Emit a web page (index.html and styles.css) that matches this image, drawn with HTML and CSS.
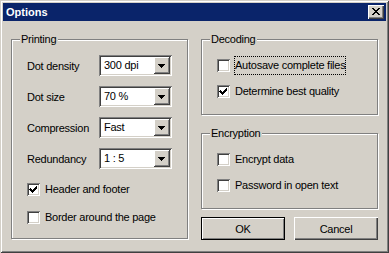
FILE: index.html
```html
<!DOCTYPE html>
<html lang="en">
<head>
    <meta charset="UTF-8">
    <title>Options</title>
    <link rel="stylesheet" href="styles.css">
</head>
<body>
    <div class="window">
        <div class="titlebar">
            <span class="title">Options</span>
            <div class="close-btn">
                <svg width="8" height="7" viewBox="0 0 8 7" shape-rendering="crispEdges">
                    <path d="M0 0h2v1h-2z M6 0h2v1h-2z M1 1h2v1h-2z M5 1h2v1h-2z M2 2h4v1h-4z M3 3h2v1h-2z M2 4h4v1h-4z M1 5h2v1h-2z M5 5h2v1h-2z M0 6h2v1h-2z M6 6h2v1h-2z" fill="#000"/>
                </svg>
            </div>
        </div>

        <div class="client">
            <div class="group printing">
                <div class="group-title">Printing</div>
                <div class="group-body">
                    <div class="field">
                        <span class="field-label">Dot density</span>
                        <div class="combo"><span class="combo-value">300 dpi</span><div class="combo-btn"><svg width="7" height="4" viewBox="0 0 7 4" shape-rendering="crispEdges"><path d="M0 0h7v1h-1v1h-1v1h-1v1h-1v-1h-1v-1h-1v-1h-1z" fill="#000"/></svg></div></div>
                    </div>
                    <div class="field">
                        <span class="field-label">Dot size</span>
                        <div class="combo"><span class="combo-value">70 %</span><div class="combo-btn"><svg width="7" height="4" viewBox="0 0 7 4" shape-rendering="crispEdges"><path d="M0 0h7v1h-1v1h-1v1h-1v1h-1v-1h-1v-1h-1v-1h-1z" fill="#000"/></svg></div></div>
                    </div>
                    <div class="field">
                        <span class="field-label">Compression</span>
                        <div class="combo"><span class="combo-value">Fast</span><div class="combo-btn"><svg width="7" height="4" viewBox="0 0 7 4" shape-rendering="crispEdges"><path d="M0 0h7v1h-1v1h-1v1h-1v1h-1v-1h-1v-1h-1v-1h-1z" fill="#000"/></svg></div></div>
                    </div>
                    <div class="field">
                        <span class="field-label">Redundancy</span>
                        <div class="combo"><span class="combo-value">1 : 5</span><div class="combo-btn"><svg width="7" height="4" viewBox="0 0 7 4" shape-rendering="crispEdges"><path d="M0 0h7v1h-1v1h-1v1h-1v1h-1v-1h-1v-1h-1v-1h-1z" fill="#000"/></svg></div></div>
                    </div>
                    <div class="check-list printing-checks">
                        <div class="check-row">
                            <span class="checkbox"><svg width="9" height="9" viewBox="0 0 9 9" shape-rendering="crispEdges"><path d="M1 3h1v1h1v1h1v-1h1v-1h1v-1h1v-1h1v3h-1v1h-1v1h-1v1h-1v1h-1v-1h-1v-1h-1v-1h-1z" fill="#000"/></svg></span>
                            <span class="check-label">Header and footer</span>
                        </div>
                        <div class="check-row">
                            <span class="checkbox"></span>
                            <span class="check-label">Border around the page</span>
                        </div>
                    </div>
                </div>
            </div>

            <div class="right-col">
                <div class="group">
                    <div class="group-title">Decoding</div>
                    <div class="group-body check-list">
                        <div class="check-row">
                            <span class="checkbox"></span>
                            <span class="check-label focused">Autosave complete files</span>
                        </div>
                        <div class="check-row">
                            <span class="checkbox"><svg width="9" height="9" viewBox="0 0 9 9" shape-rendering="crispEdges"><path d="M1 3h1v1h1v1h1v-1h1v-1h1v-1h1v-1h1v3h-1v1h-1v1h-1v1h-1v1h-1v-1h-1v-1h-1v-1h-1z" fill="#000"/></svg></span>
                            <span class="check-label">Determine best quality</span>
                        </div>
                    </div>
                </div>

                <div class="group encryption">
                    <div class="group-title">Encryption</div>
                    <div class="group-body check-list">
                        <div class="check-row">
                            <span class="checkbox"></span>
                            <span class="check-label">Encrypt data</span>
                        </div>
                        <div class="check-row">
                            <span class="checkbox"></span>
                            <span class="check-label">Password in open text</span>
                        </div>
                    </div>
                </div>

                <div class="buttons">
                    <div class="btn btn-default">OK</div>
                    <div class="btn">Cancel</div>
                </div>
            </div>
        </div>
    </div>
</body>
</html>
```

FILE: styles.css
```css
body {
    margin: 0;
    font-family: "Liberation Sans", Arial, sans-serif;
    font-size: 11px;
    letter-spacing: -0.25px;
    color: #000;
}

.window {
    width: 389px;
    height: 253px;
    box-sizing: border-box;
    padding: 3px;
    background: #d4d0c8;
    box-shadow: inset 1px 1px 0 #d4d0c8, inset -1px -1px 0 #404040,
                inset 2px 2px 0 #fff, inset -2px -2px 0 #808080;
    display: flex;
    flex-direction: column;
}

.titlebar {
    height: 18px;
    background: #0a246a;
    display: flex;
    align-items: center;
    justify-content: space-between;
    padding: 0 2px 0 3px;
}

.title {
    color: #fff;
    font-weight: bold;
    font-size: 11px;
    letter-spacing: 0;
}

.close-btn {
    width: 16px;
    height: 14px;
    box-sizing: border-box;
    background: #d4d0c8;
    box-shadow: inset 1px 1px 0 #fff, inset -1px -1px 0 #404040, inset -2px -2px 0 #808080;
    display: flex;
    align-items: center;
    justify-content: center;
}

.close-btn svg {
    display: block;
    margin: 0 1px 1px 0;
}

.client {
    display: flex;
    gap: 13px;
    padding: 18px 8px 0 8px;
}

.group {
    width: 177px;
    box-sizing: border-box;
    border: 1px solid #808080;
    box-shadow: inset 1px 1px 0 #fff, 1px 1px 0 #fff;
}

.printing {
    height: 200px;
}

.group-title {
    display: table;
    margin: -7px 0 0 8px;
    padding: 0 2px 0 1px;
    line-height: 13px;
    background: #d4d0c8;
}

.group-body {
    padding: 9px 0 0 15px;
}

.field {
    display: flex;
    align-items: center;
    height: 21px;
    margin-bottom: 10px;
}

.field-label {
    width: 72px;
}

.combo {
    width: 73px;
    height: 21px;
    box-sizing: border-box;
    padding: 2px;
    background: #fff;
    box-shadow: inset 1px 1px 0 #808080, inset -1px -1px 0 #fff,
                inset 2px 2px 0 #404040, inset -2px -2px 0 #d4d0c8;
    display: flex;
}

.combo-value {
    flex: 1;
    padding-left: 3px;
    line-height: 17px;
}

.combo-btn {
    width: 16px;
    height: 17px;
    background: #d4d0c8;
    box-shadow: inset -1px -1px 0 #404040, inset 1px 1px 0 #fff, inset -2px -2px 0 #808080;
    display: flex;
    align-items: center;
    justify-content: center;
}

.combo-btn svg {
    display: block;
    margin: 0 1px 0 0;
}

.check-list {
    display: flex;
    flex-direction: column;
    gap: 13px;
}

.printing-checks {
    margin-top: 14px;
    gap: 15px;
}

.right-col .group-body {
    padding: 13px 0 16px 15px;
}

.check-row {
    display: flex;
    align-items: center;
    height: 13px;
}

.checkbox {
    width: 13px;
    height: 13px;
    box-sizing: border-box;
    padding: 2px;
    background: #fff;
    box-shadow: inset 1px 1px 0 #808080, inset -1px -1px 0 #fff,
                inset 2px 2px 0 #404040, inset -2px -2px 0 #d4d0c8;
}

.checkbox svg {
    display: block;
}

.check-label {
    margin-left: 5px;
    line-height: 13px;
}

.check-label.focused {
    padding: 2px 0;
    outline: 1px dotted #000;
}

.right-col {
    display: flex;
    flex-direction: column;
}

.encryption {
    margin-top: 18px;
}

.buttons {
    display: flex;
    gap: 9px;
    margin-top: 8px;
}

.btn {
    width: 84px;
    height: 23px;
    box-sizing: border-box;
    background: #d4d0c8;
    box-shadow: inset 1px 1px 0 #fff, inset -1px -1px 0 #404040, inset -2px -2px 0 #808080;
    display: flex;
    align-items: center;
    justify-content: center;
}

.btn-default {
    box-shadow: inset 0 0 0 1px #000, inset 2px 2px 0 #fff, inset -2px -2px 0 #808080;
}
```
